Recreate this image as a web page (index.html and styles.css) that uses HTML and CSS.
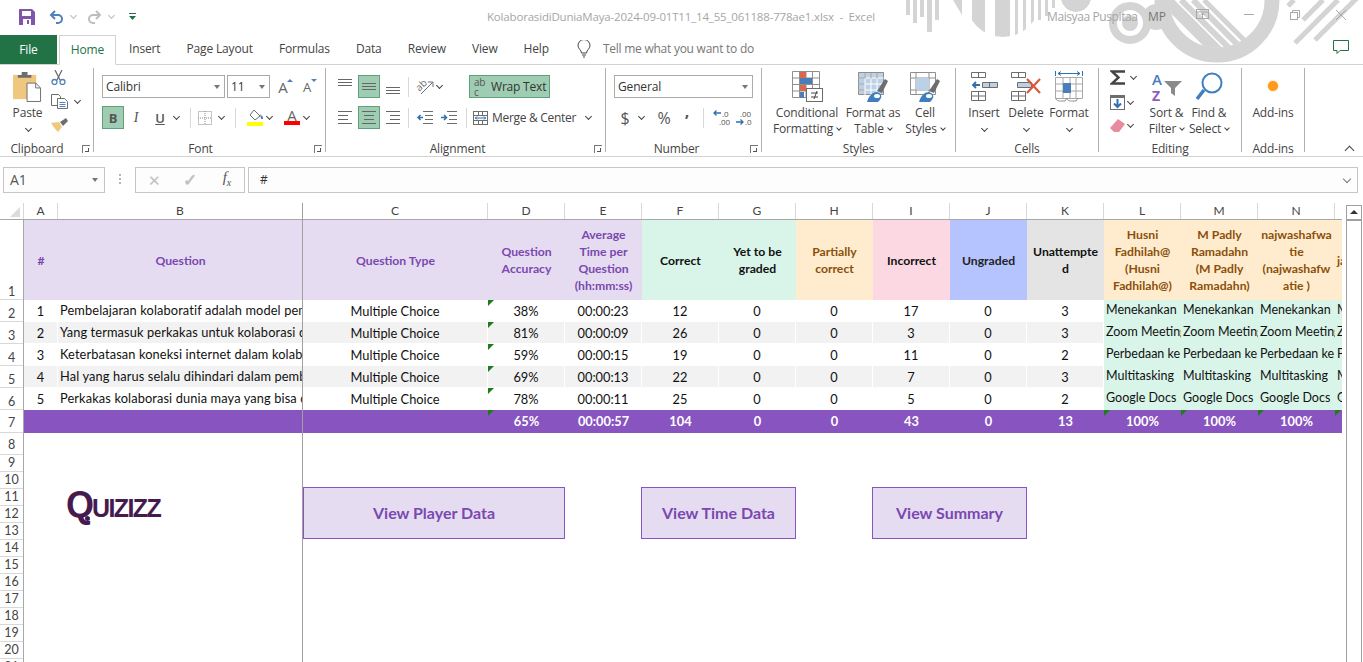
FILE: index.html
```html
<!DOCTYPE html>
<html>

<head>
    <title>KolaborasidiDuniaMaya - Excel</title>
    <link rel="stylesheet" href="styles.css">
</head>

<body>
    <!-- title bar -->
    <div class="titlebar">
        <svg class="title-art" width="463" height="66" viewBox="900 0 463 66" fill="#d4d4d4">
            <defs>
                <clipPath id="semi"><circle cx="1003" cy="0" r="37" /></clipPath>
                <clipPath id="inner"><circle cx="1217" cy="0" r="48" /></clipPath>
            </defs>
            <rect x="906" y="0" width="4" height="15" />
            <rect x="913" y="0" width="4" height="23" />
            <rect x="920" y="0" width="4" height="17" />
            <rect x="927" y="0" width="5" height="32" />
            <rect x="935" y="0" width="4" height="20" />
            <polygon points="953,0 962,15 962,0" />
            <g clip-path="url(#semi)">
                <rect x="972" y="0" width="13" height="40" />
                <rect x="995" y="0" width="15" height="40" />
                <rect x="1015" y="0" width="3" height="40" />
                <rect x="1023" y="0" width="3" height="40" />
                <rect x="1031" y="0" width="3" height="40" />
            </g>
            <rect x="1038" y="0" width="3" height="20" />
            <rect x="1045" y="0" width="3" height="16" />
            <rect x="1052" y="0" width="3" height="8" />
            <circle cx="1076" cy="-3" r="15" />
            <circle cx="1130" cy="23" r="17" fill="none" stroke="#d4d4d4" stroke-width="8" />
            <circle cx="1130" cy="23" r="8" />
            <circle cx="1156" cy="17" r="13" />
            <circle cx="1217" cy="0" r="55" fill="none" stroke="#d4d4d4" stroke-width="15" />
            <g clip-path="url(#inner)" stroke="#d4d4d4">
                <line x1="1166" y1="0" x2="1236" y2="70" stroke-width="12" />
                <line x1="1181" y1="0" x2="1251" y2="70" stroke-width="6" />
                <line x1="1193" y1="0" x2="1263" y2="70" stroke-width="6" />
                <line x1="1204" y1="0" x2="1274" y2="70" stroke-width="5" />
            </g>
            <g stroke="#d4d4d4" stroke-width="5">
                <line x1="1295" y1="43" x2="1338" y2="0" />
                <line x1="1315" y1="40" x2="1357" y2="-2" />
                <line x1="1303" y1="20" x2="1323" y2="0" />
                <line x1="1288" y1="6" x2="1294" y2="0" />
            </g>
        </svg>

        <div class="qat">
            <svg class="qat-save" width="16" height="16" viewBox="0 0 16 16">
                <path d="M0 0h13l3 3v13H0z" fill="#7e57a8" />
                <rect x="3" y="2" width="9" height="5" fill="#fff" />
                <rect x="4" y="10" width="8" height="6" fill="#fff" />
                <rect x="8" y="11" width="2" height="4" fill="#7e57a8" />
            </svg>
            <svg class="qat-arrow" width="15" height="14" viewBox="0 0 15 14" fill="none" stroke="#4f81bd" stroke-width="2">
                <path d="M6 1L2 5l4 4" />
                <path d="M2 5h7a4 4 0 0 1 0 8H7" />
            </svg>
            <span class="chev chev-pale"></span>
            <svg class="qat-arrow" width="15" height="14" viewBox="0 0 15 14" fill="none" stroke="#bdbdbd" stroke-width="2">
                <path d="M9 1l4 4-4 4" />
                <path d="M13 5H6a4 4 0 0 0 0 8h2" />
            </svg>
            <span class="chev chev-pale"></span>
            <svg class="qat-custom" width="7" height="7" viewBox="0 0 7 7" fill="#217346">
                <rect x="0" y="0" width="7" height="1" />
                <polygon points="0,3 7,3 3.5,7" />
            </svg>
        </div>
        <div class="doc-title">KolaborasidiDuniaMaya-2024-09-01T11_14_55_061188-778ae1.xlsx &nbsp;-&nbsp; Excel</div>
        <div class="user-name">Maisyaa Puspitaa</div>
        <div class="user-init">MP</div>
        <div class="win-btns">
            <svg width="13" height="11" viewBox="0 0 13 11" fill="none" stroke="#a8a8a8">
                <rect x="0.5" y="0.5" width="12" height="9" />
                <path d="M0 3h13M6.5 9V4M4.5 6l2-2 2 2" />
            </svg>
            <svg width="10" height="1" viewBox="0 0 10 1"><rect width="10" height="1" fill="#a8a8a8" /></svg>
            <svg width="10" height="10" viewBox="0 0 10 10" fill="none" stroke="#a8a8a8">
                <rect x="0.5" y="2.5" width="7" height="7" />
                <path d="M2.5 2.5v-2h7v7h-2" />
            </svg>
            <svg width="10" height="10" viewBox="0 0 10 10" stroke="#a8a8a8"><path d="M0 0l10 10M10 0L0 10" /></svg>
        </div>
    </div>

    <!-- tabs -->
    <div class="tabs">
        <div class="tab-file">File</div>
        <div class="tab-home">Home</div>
        <div class="tab">Insert</div>
        <div class="tab">Page Layout</div>
        <div class="tab">Formulas</div>
        <div class="tab">Data</div>
        <div class="tab">Review</div>
        <div class="tab">View</div>
        <div class="tab">Help</div>
        <svg class="bulb" width="14" height="18" viewBox="0 0 14 18" fill="none" stroke="#444">
            <path d="M4.5 13c0-3-3.500-4-3.500-7.500a6 6 0 0 1 12 0C13 9 9.500 10 9.500 13z" />
            <path d="M5 15h4M6 17h2" />
        </svg>
        <div class="tell-me">Tell me what you want to do</div>
        <svg class="comment" width="17" height="15" viewBox="0 0 17 15" fill="none" stroke="#217346">
            <path d="M0.500 0.500h15v10H7l-3 3v-3H0.500z" />
        </svg>
    </div>

    <!-- ribbon -->
    <div class="ribbon">
        <div class="group group-clip">
            <div class="group-body">
                <div class="big big-paste">
                    <div class="big-icon">
                        <svg width="29" height="31" viewBox="0 0 30 32">
                            <rect x="0" y="4" width="24" height="25" fill="#efc77f" />
                            <path d="M5 7V4h4V1h6v3h4v3z" fill="#6d6d6d" />
                            <path d="M14.500 12.500h9l5 5v14h-14z" fill="#fff" stroke="#6d6d6d" />
                            <path d="M23.500 12.500v5h5" fill="none" stroke="#6d6d6d" />
                        </svg>
                    </div>
                    <span>Paste</span>
                    <span class="chev-line"><i class="chev"></i></span>
                </div>
                <div class="clip-tools">
                    <svg width="15" height="15" viewBox="0 0 15 15" fill="none">
                        <path d="M4 0l5 10M11 0L6 10" stroke="#6d6d6d" stroke-width="1.300" />
                        <circle cx="3.500" cy="12" r="2.500" stroke="#4f81bd" stroke-width="1.300" />
                        <circle cx="11.500" cy="12" r="2.500" stroke="#4f81bd" stroke-width="1.300" />
                    </svg>
                    <div class="row-tight">
                        <svg width="18" height="15" viewBox="0 0 18 15" fill="#fff" stroke="#6d6d6d">
                            <path d="M0.500 0.500h7l2 2v9h-9z" />
                            <path d="M6.500 4.500h7l3 3v7h-10z" />
                            <path d="M8.500 8.500h6M8.500 10.500h6M8.500 12.500h6" stroke="#4f81bd" />
                        </svg>
                        <i class="chev chev-copy"></i>
                    </div>
                    <svg width="17" height="14" viewBox="0 0 17 14">
                        <path d="M0 5l8-1 3 5-4 5C5 12 2 8 0 5z" fill="#efc77f" />
                        <path d="M9 4l6-4 2 3-5 5z" fill="#6d6d6d" />
                    </svg>
                </div>
            </div>
            <div class="group-label">Clipboard</div>
            <i class="launcher"></i>
        </div>

        <div class="group group-font">
            <div class="group-body stack">
                <div class="tool-row">
                    <div class="select select-font">Calibri<i class="caret"></i></div>
                    <div class="select select-size">11<i class="caret"></i></div>
                    <div class="tb grow">A<i class="mini-up"></i></div>
                    <div class="tb shrink">A<i class="mini-down"></i></div>
                </div>
                <div class="tool-row">
                    <div class="tb on fmt-b">B</div>
                    <div class="tb fmt-i">I</div>
                    <div class="tb fmt-u">U</div>
                    <i class="chev"></i>
                    <i class="vsep"></i>
                    <div class="tb">
                        <svg width="14" height="14" viewBox="0 0 14 14" fill="none" stroke="#8a8a8a" stroke-dasharray="1 1">
                            <path d="M0.500 0.500h13v13h-13zM7 0v14M0 7h14" />
                        </svg>
                    </div>
                    <i class="chev"></i>
                    <i class="vsep"></i>
                    <div class="tb gap-5">
                        <svg width="17" height="17" viewBox="0 0 17 17">
                            <path d="M7 1l6 6-5 4-5-5z" fill="#fff" stroke="#6d6d6d" />
                            <path d="M13 5l3 3v2h-2z" fill="#4f81bd" />
                            <rect x="0" y="13" width="16" height="4" fill="#ffff00" />
                        </svg>
                    </div>
                    <i class="chev chev-1"></i>
                    <div class="tb gap-7 font-color">A</div>
                    <i class="chev chev-1"></i>
                </div>
            </div>
            <div class="group-label">Font</div>
            <i class="launcher"></i>
        </div>

        <div class="group group-align">
            <div class="group-body stack">
                <div class="tool-row">
                    <div class="tb"><i class="lines lines-top"></i></div>
                    <div class="tb on gap-2"><i class="lines"></i></div>
                    <div class="tb gap-2"><i class="lines lines-bot"></i></div>
                    <i class="vsep vsep-4"></i>
                    <div class="tb gap-5">
                        <svg width="18" height="18" viewBox="0 0 18 18" fill="none" stroke="#6d6d6d">
                            <text x="0" y="11" font-size="10" font-family="Open Sans, sans-serif" fill="#6d6d6d" stroke="none" transform="rotate(-45 5 8)">ab</text>
                            <path d="M5 16L16 5M12 4h5v5" />
                        </svg>
                    </div>
                    <i class="chev chev-1"></i>
                    <div class="wrap-btn">
                        <span class="abc"><b>ab</b><b>c</b></span>
                        <span>Wrap Text</span>
                    </div>
                </div>
                <div class="tool-row">
                    <div class="tb"><i class="lines lines-left"></i></div>
                    <div class="tb on gap-2"><i class="lines lines-center"></i></div>
                    <div class="tb gap-2"><i class="lines lines-right"></i></div>
                    <i class="vsep vsep-4"></i>
                    <div class="tb gap-5">
                        <svg width="16" height="13" viewBox="0 0 16 13" fill="none">
                            <path d="M6 .500h10M8 4.500h8M8 8.500h8M6 12.500h10" stroke="#6d6d6d" />
                            <path d="M6 6.500H1M3.500 4l-2.500 2.500L3.500 9" stroke="#2f6fb0" stroke-width="1.500" />
                        </svg>
                    </div>
                    <div class="tb gap-2">
                        <svg width="16" height="13" viewBox="0 0 16 13" fill="none">
                            <path d="M6 .500h10M8 4.500h8M8 8.500h8M6 12.500h10" stroke="#6d6d6d" />
                            <path d="M0 6.500h5M3 4l2.500 2.500L3 9" stroke="#2f6fb0" stroke-width="1.500" />
                        </svg>
                    </div>
                    <i class="vsep vsep-merge"></i>
                    <div class="merge">
                        <svg width="15" height="14" viewBox="0 0 15 14" fill="none" stroke="#6d6d6d">
                            <rect x="0.500" y="0.500" width="14" height="13" />
                            <path d="M0 4.500h15M0 9.500h15M5.500 0v4M9.500 0v4M5.500 10v4M9.500 10v4" />
                            <path d="M2 7h11M4 5.500L2.500 7 4 8.500M11 5.500L12.500 7 11 8.500" stroke="#2f6fb0" />
                        </svg>
                        <span class="merge-text">Merge &amp; Center</span>
                        <i class="chev chev-merge"></i>
                    </div>
                </div>
            </div>
            <div class="group-label">Alignment</div>
            <i class="launcher"></i>
        </div>

        <div class="group group-number">
            <div class="group-body stack">
                <div class="tool-row">
                    <div class="select select-num">General<i class="caret"></i></div>
                </div>
                <div class="tool-row">
                    <div class="tb num-sym">$</div>
                    <i class="chev"></i>
                    <div class="tb gap-7 num-sym">%</div>
                    <div class="tb num-sym num-comma gap-1">,</div>
                    <i class="vsep vsep-5"></i>
                    <div class="tb gap-7">
                        <svg width="18" height="16" viewBox="0 0 18 16" fill="none">
                            <path d="M8 3H1M3.500 .500L1 3l2.500 2.500" stroke="#2f6fb0" stroke-width="1.300" />
                            <text x="9" y="7" font-size="8" font-family="Open Sans, sans-serif" fill="#555">.0</text>
                            <text x="6" y="15" font-size="8" font-family="Open Sans, sans-serif" fill="#555">.00</text>
                        </svg>
                    </div>
                    <div class="tb">
                        <svg width="18" height="16" viewBox="0 0 18 16" fill="none">
                            <text x="5" y="7" font-size="8" font-family="Open Sans, sans-serif" fill="#555">.00</text>
                            <path d="M1 12h7M5.500 9.500L8 12l-2.500 2.500" stroke="#2f6fb0" stroke-width="1.300" />
                            <text x="10" y="15" font-size="8" font-family="Open Sans, sans-serif" fill="#555">.0</text>
                        </svg>
                    </div>
                </div>
            </div>
            <div class="group-label">Number</div>
            <i class="launcher"></i>
        </div>

        <div class="group group-styles">
            <div class="group-body">
                <div class="big big-cond">
                    <div class="big-icon">
                        <svg width="31" height="31" viewBox="0 0 31 31">
                            <path d="M.500 .500h27v26h-27zM.500 7h27M.500 13.500h27M.500 20h27M7.500 0v27M14 0v27M20.500 0v27" fill="#fff" stroke="#8f8f8f" />
                            <rect x="8" y="1" width="6" height="6" fill="#d9694a" />
                            <rect x="8" y="7" width="12" height="6" fill="#4a7ebb" />
                            <rect x="8" y="14" width="6" height="6" fill="#d9694a" />
                            <rect x="8" y="21" width="4" height="6" fill="#4a7ebb" />
                            <rect x="14.500" y="17.500" width="16" height="13" fill="#fff" stroke="#6d6d6d" />
                            <path d="M19 22h7M19 26h7M25 20l-3 8" stroke="#444" fill="none" />
                        </svg>
                    </div>
                    <span>Conditional</span>
                    <span>Formatting<i class="chev chev-text"></i></span>
                </div>
                <div class="big big-table">
                    <div class="big-icon">
                        <svg width="30" height="30" viewBox="0 0 30 30">
                            <path d="M.500 .500h25v22h-25z" fill="#bcd0e6" stroke="#8f8f8f" />
                            <path d="M.500 6h25M.500 12h25M.500 18h25M7 0v23M13 0v23M19 0v23" stroke="#fff" />
                            <path d="M.500 .500h25M.500 6h6M.500 12h6M.500 18h6M7 .500v6M13 .500v6M19 .500v6" stroke="#8f8f8f" fill="none" />
                            <path d="M19 19l8-12 3 2-6 12z" fill="#6d6d6d" />
                            <path d="M9 30c2-7 6-10 10-10 3 1 5 3 4 6-1 2-2 3-3 4z" fill="#3f7fbf" />
                            <ellipse cx="19" cy="24" rx="3" ry="2" fill="#fff" />
                        </svg>
                    </div>
                    <span>Format as</span>
                    <span>Table<i class="chev chev-text"></i></span>
                </div>
                <div class="big big-cell">
                    <div class="big-icon">
                        <svg width="30" height="30" viewBox="0 0 30 30">
                            <path d="M.500 .500h25v22h-25zM.500 6h25M.500 18h25M6 0v23M19 0v23" fill="#fff" stroke="#8f8f8f" />
                            <rect x="6" y="6" width="13" height="12" fill="#bcd0e6" />
                            <path d="M19 19l8-12 3 2-6 12z" fill="#6d6d6d" />
                            <path d="M9 30c2-7 6-10 10-10 3 1 5 3 4 6-1 2-2 3-3 4z" fill="#3f7fbf" />
                            <ellipse cx="19" cy="24" rx="3" ry="2" fill="#fff" />
                        </svg>
                    </div>
                    <span>Cell</span>
                    <span>Styles<i class="chev chev-text"></i></span>
                </div>
            </div>
            <div class="group-label">Styles</div>
        </div>

        <div class="group group-cells">
            <div class="group-body">
                <div class="big big-insert">
                    <div class="big-icon">
                        <svg width="27" height="29" viewBox="0 0 27 29" fill="none" stroke="#6d6d6d">
                            <path d="M.500 .500h14v5h-14zM7.500 .500v5" />
                            <path d="M11.500 10.500h15v5h-15zM18.500 10.500v5" fill="#bcd0e6" />
                            <path d="M.500 19.500h14v9h-14zM.500 24h14M7.500 19.500v9" />
                            <path d="M9 13H2M5 10l-3 3 3 3" stroke="#2f6fb0" stroke-width="1.800" />
                        </svg>
                    </div>
                    <span>Insert</span>
                    <span class="chev-line"><i class="chev"></i></span>
                </div>
                <div class="big big-delete">
                    <div class="big-icon">
                        <svg width="31" height="29" viewBox="0 0 31 29" fill="none" stroke="#6d6d6d">
                            <path d="M.500 .500h14v5h-14zM7.500 .500v5" />
                            <path d="M6.500 10.500h14v5h-14z" fill="#bcd0e6" />
                            <path d="M.500 19.500h14v9h-14zM.500 24h14M7.500 19.500v9" />
                            <path d="M16 7l13 14M29 7L16 21" stroke="#d9593a" stroke-width="2.200" />
                        </svg>
                    </div>
                    <span>Delete</span>
                    <span class="chev-line"><i class="chev"></i></span>
                </div>
                <div class="big big-format">
                    <div class="big-icon">
                        <svg width="28" height="31" viewBox="0 0 28 31" fill="none">
                            <path d="M.500 6.500h27v21h-27zM.500 13h27M.500 20h27M8 6.500v21M15 6.500v21M21 6.500v21" fill="#fff" stroke="#a8a8a8" />
                            <rect x="8" y="12" width="8" height="10" fill="#4a7ebb" />
                            <path d="M.500 0v5M27.500 0v5M3 2.500h22M6 .500L3 2.500l3 2M22 .500l3 2-3 2" stroke="#2f6fb0" />
                            <path d="M1 27c0 3 3 3 5 3h4l2-3M12 27c0 3 3 3 5 3h4l2-3" stroke="#8f8f8f" />
                        </svg>
                    </div>
                    <span>Format</span>
                    <span class="chev-line"><i class="chev"></i></span>
                </div>
            </div>
            <div class="group-label">Cells</div>
        </div>

        <div class="group group-edit">
            <div class="group-body">
                <div class="edit-tools">
                    <div class="row-tight">
                        <svg width="15" height="15" viewBox="0 0 15 15" fill="none" stroke="#444">
                            <path d="M15 1.500H2L8.500 7.500 2 13.500h13" stroke-width="2.400" />
                        </svg>
                        <i class="chev chev-sum"></i>
                    </div>
                    <div class="row-tight">
                        <svg width="15" height="15" viewBox="0 0 15 15">
                            <rect x="0.500" y="0.500" width="14" height="14" fill="#fff" stroke="#6d6d6d" />
                            <rect x="0" y="0" width="15" height="3" fill="#6d6d6d" />
                            <path d="M7.500 4v8M4 8.500l3.500 3.500L11 8.500" fill="none" stroke="#2f6fb0" stroke-width="2" />
                        </svg>
                        <i class="chev"></i>
                    </div>
                    <div class="row-tight">
                        <svg width="15" height="13" viewBox="0 0 15 13">
                            <path d="M0 9l8-9 7 5-6 8H4z" fill="#e98b9e" />
                        </svg>
                        <i class="chev"></i>
                    </div>
                </div>
                <div class="big big-sort">
                    <div class="big-icon">
                        <svg width="31" height="32" viewBox="0 0 31 32">
                            <text x="1" y="14" font-size="15" font-family="Open Sans, sans-serif" font-weight="600" fill="#4a7ebb">A</text>
                            <text x="1" y="30" font-size="14" font-family="Open Sans, sans-serif" font-weight="700" fill="#8d5fb8">Z</text>
                            <path d="M13 10h18l-7 7v8l-4-3v-5z" fill="#8a8a8a" />
                        </svg>
                    </div>
                    <span>Sort &amp;</span>
                    <span>Filter<i class="chev chev-text"></i></span>
                </div>
                <div class="big big-find">
                    <div class="big-icon">
                        <svg width="28" height="29" viewBox="0 0 28 29" fill="none" stroke="#3f7fbf">
                            <circle cx="17" cy="11" r="9.500" stroke-width="2" />
                            <path d="M9 18L2 27" stroke-width="3.500" />
                        </svg>
                    </div>
                    <span>Find &amp;</span>
                    <span>Select<i class="chev chev-text"></i></span>
                </div>
            </div>
            <div class="group-label">Editing</div>
        </div>

        <div class="group group-addins">
            <div class="group-body">
                <div class="big big-addins">
                    <div class="big-icon"><i class="addin-dot"></i></div>
                    <span>Add-ins</span>
                </div>
            </div>
            <div class="group-label">Add-ins</div>
        </div>

        <i class="collapse"></i>
    </div>

    <!-- formula bar -->
    <div class="formula-bar">
        <div class="name-box">A1<i class="caret"></i></div>
        <div class="fx-dots"></div>
        <div class="fx-buttons">
            <span class="fx-x">&#10005;</span>
            <span class="fx-check">&#10003;</span>
            <span class="fx-f">f<sub>x</sub></span>
        </div>
        <div class="fx-input">#<i class="chev chev-fx"></i></div>
    </div>

    <!-- sheet -->
    <div class="sheet-wrap">
        <div class="sheet">
            <div class="col-heads">
                <div class="corner"><i class="corner-tri"></i></div>
                <div>A</div><div>B</div><div>C</div><div>D</div><div>E</div><div>F</div><div>G</div><div>H</div><div>I</div><div>J</div><div>K</div><div>L</div><div>M</div><div>N</div><div>O</div>
            </div>
            <div class="sheet-body">
                <div class="row-heads">
                    <div class="rh rh-1">1</div>
                    <div class="rh rh-22">2</div><div class="rh rh-22">3</div><div class="rh rh-22">4</div><div class="rh rh-22">5</div><div class="rh rh-22">6</div>
                    <div class="rh rh-23">7</div><div class="rh rh-8">8</div>
                    <div class="rh">9</div><div class="rh">10</div><div class="rh">11</div><div class="rh">12</div><div class="rh">13</div><div class="rh">14</div><div class="rh">15</div><div class="rh">16</div><div class="rh">17</div><div class="rh">18</div><div class="rh">19</div><div class="rh">20</div><div class="rh">21</div>
                </div>
                <div class="canvas">
                    <div class="cells">
                        <div class="h h-p">#</div><div class="h h-p">Question</div><div class="h h-p">Question Type</div><div class="h h-p">Question Accuracy</div><div class="h h-p">Average Time per Question (hh:mm:ss)</div>
                        <div class="h h-g">Correct</div><div class="h h-g">Yet to be graded</div><div class="h h-o">Partially correct</div><div class="h h-r">Incorrect</div><div class="h h-b">Ungraded</div><div class="h h-n">Unattempte<br>d</div>
                        <div class="h h-o">Husni Fadhilah@ (Husni Fadhilah@)</div><div class="h h-o">M Padly Ramadahn (M Padly Ramadahn)</div><div class="h h-o">najwashafwatie (najwashafwatie )</div><div class="h h-o h-cut">ja</div>

                        <div class="c">1</div><div class="c q">Pembelajaran kolaboratif adalah model pembelajaran</div><div class="c">Multiple Choice</div><div class="c tri">38%</div><div class="c">00:00:23</div><div class="c">12</div><div class="c">0</div><div class="c">0</div><div class="c">17</div><div class="c">0</div><div class="c">3</div><div class="a">Menekankan</div><div class="a">Menekankan</div><div class="a">Menekankan</div><div class="a">Menekankan</div>

                        <div class="c s">2</div><div class="c s q">Yang termasuk perkakas untuk kolaborasi dunia maya</div><div class="c s">Multiple Choice</div><div class="c s tri">81%</div><div class="c s">00:00:09</div><div class="c s">26</div><div class="c s">0</div><div class="c s">0</div><div class="c s">3</div><div class="c s">0</div><div class="c s">3</div><div class="a">Zoom Meeting</div><div class="a">Zoom Meeting</div><div class="a">Zoom Meeting</div><div class="a">Zoom Meeting</div>

                        <div class="c">3</div><div class="c q">Keterbatasan koneksi internet dalam kolaborasi</div><div class="c">Multiple Choice</div><div class="c tri">59%</div><div class="c">00:00:15</div><div class="c">19</div><div class="c">0</div><div class="c">0</div><div class="c">11</div><div class="c">0</div><div class="c">2</div><div class="a">Perbedaan ke</div><div class="a">Perbedaan ke</div><div class="a">Perbedaan ke</div><div class="a">Perbedaan ke</div>

                        <div class="c s">4</div><div class="c s q">Hal yang harus selalu dihindari dalam pembelajaran</div><div class="c s">Multiple Choice</div><div class="c s tri">69%</div><div class="c s">00:00:13</div><div class="c s">22</div><div class="c s">0</div><div class="c s">0</div><div class="c s">7</div><div class="c s">0</div><div class="c s">3</div><div class="a">Multitasking</div><div class="a">Multitasking</div><div class="a">Multitasking</div><div class="a">Multitasking</div>

                        <div class="c">5</div><div class="c q">Perkakas kolaborasi dunia maya yang bisa digunakan</div><div class="c">Multiple Choice</div><div class="c tri">78%</div><div class="c">00:00:11</div><div class="c">25</div><div class="c">0</div><div class="c">0</div><div class="c">5</div><div class="c">0</div><div class="c">2</div><div class="a">Google Docs</div><div class="a">Google Docs</div><div class="a">Google Docs</div><div class="a">Google Docs</div>

                        <div class="t"></div><div class="t"></div><div class="t"></div><div class="t tri">65%</div><div class="t">00:00:57</div><div class="t">104</div><div class="t">0</div><div class="t">0</div><div class="t">43</div><div class="t">0</div><div class="t">13</div><div class="t tri">100%</div><div class="t tri">100%</div><div class="t tri">100%</div><div class="t tri"></div>
                    </div>

                    <div class="logo"><span class="logo-q">Q</span>UIZIZZ</div>
                    <div class="sheet-btn btn-player">View Player Data</div>
                    <div class="sheet-btn btn-time">View Time Data</div>
                    <div class="sheet-btn btn-summary">View Summary</div>
                </div>
            </div>
            <div class="freeze-line"></div>
        </div>
        <div class="scrollbar">
            <div class="scroll-up"><i></i></div>
            <div class="scroll-thumb"></div>
        </div>
    </div>
</body>

</html>
```

FILE: styles.css
```css
html, body {
    margin: 0;
    padding: 0;
    height: 662px;
    overflow: hidden;
    background: #fff;
}

body {
    font-family: "Open Sans", sans-serif;
    font-size: 12px;
    letter-spacing: -0.15px;
    color: #444;
    width: 1363px;
}

i {
    font-style: normal;
}

/* title bar */
.titlebar {
    height: 33px;
    display: flex;
    align-items: center;
    position: relative;
}

.title-art {
    position: absolute;
    left: 900px;
    top: 0;
}

.qat {
    width: 487px;
    display: flex;
    align-items: center;
    position: relative;
    padding-left: 19px;
    box-sizing: border-box;
}

.qat-save {
    margin-right: 14px;
}

.qat-custom {
    margin-left: 4px;
}

.qat-arrow {
    margin-right: 7px;
}

.qat .chev {
    margin: 0 11px 2px 0;
}

.doc-title {
    width: 560px;
    color: #a6a6a6;
    position: relative;
    white-space: nowrap;
    font-size: 11.500px;
    letter-spacing: -0.18px;
}

.user-name {
    width: 101px;
    color: #a6a6a6;
    position: relative;
    white-space: nowrap;
    letter-spacing: -0.4px;
}

.user-init {
    width: 48px;
    color: #777;
    position: relative;
}

.win-btns {
    display: flex;
    position: relative;
    align-items: center;
    margin-bottom: 4px;
}

.win-btns svg:nth-child(2) {
    margin-left: 35px;
}

.win-btns svg:nth-child(3) {
    margin-left: 36px;
}

.win-btns svg:nth-child(4) {
    margin-left: 36px;
}

/* tabs */
.tabs {
    height: 31px;
    display: flex;
    align-items: center;
    position: relative;
}

.tab-file {
    width: 57px;
    height: 29px;
    margin-top: 1px;
    background: #217346;
    color: #fff;
    text-align: center;
    line-height: 29px;
}

.tab-home {
    width: 57px;
    height: 30px;
    margin-left: 2px;
    margin-top: 2px;
    border: 1px solid #d2d2d2;
    border-bottom: 1px solid #fff;
    color: #217346;
    text-align: center;
    line-height: 28px;
    box-sizing: border-box;
    position: relative;
    z-index: 2;
    background: #fff;
}

.tab {
    padding: 0 13px;
    line-height: 30px;
}

.bulb {
    margin-left: 15px;
}

.tell-me {
    margin-left: 12px;
    color: #777;
    letter-spacing: -0.25px;
}

.comment {
    position: absolute;
    left: 1333px;
    top: 7px;
}

/* ribbon */
.ribbon {
    height: 93px;
    box-sizing: border-box;
    border-top: 1px solid #d2d2d2;
    border-bottom: 1px solid #d2d2d2;
    display: flex;
    position: relative;
}

.group {
    height: 84px;
    margin-top: 3px;
    box-sizing: border-box;
    border-right: 1px solid #b0b0b0;
    display: flex;
    flex-direction: column;
    position: relative;
}

.group-clip { width: 94px; padding-left: 9px; }
.group-font { width: 232px; padding-left: 8px; }
.group-align { width: 280px; padding-left: 8px; }
.group-number { width: 156px; padding-left: 8px; }
.group-styles { width: 194px; padding-left: 10px; }
.group-cells { width: 143px; padding-left: 7px; }
.group-edit { width: 143px; padding-left: 11px; }
.group-addins { width: 63px; }

.group-body {
    height: 72px;
    display: flex;
}

.group-body.stack {
    flex-direction: column;
    gap: 8px;
    padding-top: 7px;
    box-sizing: border-box;
}

.group-label {
    height: 16px;
    line-height: 16px;
    text-align: center;
    margin-top: 1px;
    margin-bottom: -5px;
    color: #444;
}

.group-clip .group-label { margin-left: -9px; padding-right: 19px; }
.group-font .group-label { margin-left: -8px; padding-right: 18px; }
.group-align .group-label { margin-left: -8px; padding-right: 16px; }
.group-number .group-label { margin-left: -8px; padding-right: 14px; }
.group-styles .group-label { margin-left: -10px; }
.group-cells .group-label { margin-left: -7px; }
.group-edit .group-label { margin-left: -11px; }

.launcher {
    position: absolute;
    right: 3px;
    bottom: -1px;
    width: 7px;
    height: 7px;
    border-left: 1px solid #777;
    border-top: 1px solid #777;
}

.launcher::after {
    content: "";
    position: absolute;
    left: 2px;
    top: 2px;
    width: 3px;
    height: 3px;
    border-right: 1px solid #555;
    border-bottom: 1px solid #555;
}

.collapse {
    position: absolute;
    left: 1346px;
    top: 82px;
    width: 6px;
    height: 6px;
    border-left: 1px solid #444;
    border-top: 1px solid #444;
    transform: rotate(45deg);
}

.big {
    display: flex;
    flex-direction: column;
    align-items: center;
    line-height: 16px;
    white-space: nowrap;
}

.big-icon {
    height: 37px;
    display: flex;
    align-items: center;
    justify-content: center;
}

.big-paste { width: 37px; }
.big-cond { width: 70px; }
.big-table { width: 62px; }
.big-cell { width: 42px; }
.big-insert { width: 42px; }
.big-delete { width: 42px; }
.big-format { width: 44px; }
.big-sort { width: 41px; }
.big-find { width: 44px; }
.big-addins { width: 62px; }

.clip-tools {
    margin-left: 5px;
    height: 62px;
    padding-top: 2px;
    display: flex;
    flex-direction: column;
    justify-content: space-between;
}

.edit-tools {
    width: 36px;
    height: 62px;
    padding-top: 2px;
    display: flex;
    flex-direction: column;
    justify-content: space-between;
}

.row-tight {
    display: flex;
    align-items: center;
}

.chev {
    display: inline-block;
    width: 4px;
    height: 4px;
    margin-left: 3px;
    margin-right: 2px;
    margin-bottom: 2px;
    border-right: 1px solid #444;
    border-bottom: 1px solid #444;
    transform: rotate(45deg);
    flex: none;
}

.chev-pale { border-color: #bbb; }
.chev-1 { margin-left: 1px; }
.chev-copy { margin-left: 6px; }
.chev-sum { margin-left: 6px; }
.chev-text { margin-left: 4px; margin-right: 0; margin-bottom: 3px; width: 3px; height: 3px; }
.chev-merge { margin-left: 10px; }
.chev-fx { position: absolute; right: 5px; top: 8px; border-color: #777; width: 5px; height: 5px; }

.chev-line {
    height: 16px;
    display: flex;
    align-items: center;
}

.tool-row {
    display: flex;
    align-items: center;
    height: 23px;
}

.tb {
    width: 22px;
    height: 23px;
    box-sizing: border-box;
    display: flex;
    align-items: center;
    justify-content: center;
    flex: none;
    position: relative;
}

.tb.on {
    background: #9fcdb3;
    border: 1px solid #5fa27a;
}

.gap-1 { margin-left: 1px; }
.gap-2 { margin-left: 2px; }
.gap-5 { margin-left: 5px; }
.gap-7 { margin-left: 7px; }

.vsep {
    width: 1px;
    height: 20px;
    background: #d8d8d8;
    margin: 0 3px 0 9px;
    flex: none;
}

.vsep-4 { margin: 0 0 0 4px; }
.vsep-5 { margin: 0 0 0 5px; }
.vsep-merge { margin: 0 6px 0 6px; }

.select {
    height: 23px;
    box-sizing: border-box;
    border: 1px solid #ababab;
    line-height: 21px;
    padding-left: 3px;
    position: relative;
    color: #333;
    flex: none;
}

.select-font { width: 123px; }
.select-size { width: 43px; margin-left: 2px; margin-right: 2px; }
.select-num { width: 139px; }

.caret {
    position: absolute;
    right: 4px;
    top: 9px;
    border-left: 3.500px solid transparent;
    border-right: 3.500px solid transparent;
    border-top: 4px solid #777;
}

.grow, .shrink {
    color: #666;
    font-size: 15px;
}

.shrink {
    margin-left: 2px;
    font-size: 13px;
}

.mini-up, .mini-down {
    position: absolute;
    right: 1px;
    top: 4px;
    border-left: 3px solid transparent;
    border-right: 3px solid transparent;
}

.mini-up { border-bottom: 3px solid #4f81bd; }
.mini-down { border-top: 3px solid #4f81bd; }

.fmt-b { font-weight: 700; font-size: 13px; color: #555; }
.fmt-i { font-style: italic; font-size: 14px; color: #555; font-family: "Liberation Serif", serif; margin-left: 1px; }
.fmt-u { font-size: 13px; font-weight: 600; text-decoration: underline; margin-left: 2px; color: #555; }

.font-color {
    font-size: 15px;
    font-weight: 500;
    color: #666;
    align-items: flex-start;
    line-height: 18px;
}

.font-color::after {
    content: "";
    position: absolute;
    left: 3px;
    top: 15px;
    width: 16px;
    height: 4px;
    background: #ff0000;
}

.lines {
    display: block;
    width: 14px;
    height: 7px;
    border-top: 1px solid #666;
    border-bottom: 1px solid #666;
    position: relative;
    box-sizing: border-box;
}

.lines::after {
    content: "";
    position: absolute;
    left: 0;
    right: 0;
    top: 2px;
    height: 1px;
    background: #666;
}

.lines-top { margin-bottom: 8px; }
.lines-bot { margin-top: 8px; }

.lines-left, .lines-center, .lines-right {
    height: 13px;
    background: linear-gradient(#666, #666) 0 3px / 10px 1px no-repeat, linear-gradient(#666, #666) 0 7px / 10px 1px no-repeat;
}

.lines-left::after, .lines-center::after, .lines-right::after { display: none; }
.lines-center { background-position: 2px 3px, 2px 7px; }
.lines-right { background-position: 4px 3px, 4px 7px; }

.wrap-btn {
    width: 81px;
    height: 23px;
    margin-left: 25px;
    box-sizing: border-box;
    background: #9fcdb3;
    border: 1px solid #5fa27a;
    display: flex;
    align-items: center;
    gap: 5px;
    padding-left: 4px;
    flex: none;
    color: #333;
    white-space: nowrap;
    letter-spacing: -0.2px;
}

.abc {
    display: flex;
    flex-direction: column;
    font-size: 10px;
    line-height: 10px;
    color: #555;
    width: 12px;
}

.abc b {
    font-weight: 400;
}

.merge {
    display: flex;
    align-items: center;
    gap: 4px;
    white-space: nowrap;
}

.merge .chev {
    margin-left: 6px;
}

.merge-text {
    letter-spacing: -0.3px;
}

.num-sym {
    font-size: 16px;
    color: #555;
}

.num-comma {
    font-weight: 700;
    padding-bottom: 14px;
}

.addin-dot {
    display: block;
    width: 10px;
    height: 10px;
    border-radius: 50%;
    background: #ff9a1a;
    box-shadow: 0 0 2px #ffb765;
    margin-bottom: 1px;
}

/* formula bar */
.formula-bar {
    height: 46px;
    box-sizing: border-box;
    padding: 10px 3px 10px 3px;
    display: flex;
    background: #fff;
}

.name-box, .fx-buttons, .fx-input {
    height: 26px;
    box-sizing: border-box;
    border: 1px solid #c6c6c6;
    background: #fdfdfd;
    line-height: 24px;
    position: relative;
}

.name-box {
    width: 102px;
    padding-left: 6px;
    font-size: 14px;
    color: #555;
}

.name-box .caret {
    right: 6px;
    top: 10px;
}

.fx-dots {
    width: 30px;
    position: relative;
}

.fx-dots::after {
    content: "";
    position: absolute;
    left: 14px;
    top: 7px;
    width: 2px;
    height: 2px;
    background: #b5b5b5;
    box-shadow: 0 4px #b5b5b5, 0 8px #b5b5b5;
}

.fx-buttons {
    width: 110px;
    display: flex;
    align-items: center;
}

.fx-x { margin-left: 12px; color: #c0c0c0; font-size: 15px; }
.fx-check { margin-left: 22px; color: #c0c0c0; font-size: 17px; font-weight: 700; }
.fx-f { margin-left: 26px; font-family: "Liberation Serif", serif; font-style: italic; font-size: 15px; color: #555; }
.fx-f sub { font-size: 10px; }

.fx-input {
    width: 1110px;
    margin-left: 3px;
    padding-left: 11px;
    color: #333;
}

/* sheet */
.sheet-wrap {
    display: flex;
    height: 459px;
}

.sheet {
    width: 1342px;
    overflow: hidden;
    position: relative;
}

.col-heads {
    display: grid;
    grid-template-columns: 24px 34px 245px 185px repeat(11, 77px) 77px;
    height: 17px;
    box-sizing: border-box;
    border-bottom: 1px solid #a8a8a8;
    color: #444;
    font-family: "Lato", sans-serif;
    letter-spacing: 0;
    text-align: center;
    line-height: 15px;
    font-size: 12px;
}

.col-heads > div {
    border-right: 1px solid #d8d8d8;
    box-sizing: border-box;
}

.corner {
    position: relative;
}

.corner-tri {
    position: absolute;
    right: 3px;
    bottom: 2px;
    border-left: 10px solid transparent;
    border-bottom: 10px solid #dcdcdc;
}

.sheet-body {
    display: flex;
    height: 442px;
}

.row-heads {
    width: 24px;
    flex: none;
    border-right: 1px solid #a8a8a8;
    box-sizing: border-box;
    font-family: "Lato", sans-serif;
    letter-spacing: 0;
    font-size: 12.500px;
    text-align: center;
}

.rh {
    height: 17px;
    box-sizing: border-box;
    border-bottom: 1px solid #d8d8d8;
    display: flex;
    align-items: flex-end;
    justify-content: center;
    line-height: 16px;
}

.rh-1 { height: 80px; line-height: 14px; }
.rh-22 { height: 22px; line-height: 14px; }
.rh-23 { height: 23px; line-height: 18px; }
.rh-8 { height: 22px; line-height: 18px; }

.canvas {
    flex: 1;
    position: relative;
    font-family: "Lato", sans-serif;
    letter-spacing: 0;
    color: #111;
    font-size: 12.800px;
}

.cells {
    display: grid;
    grid-template-columns: 34px 245px 185px repeat(12, 77px);
    grid-template-rows: 80px repeat(5, 22px) 23px;
}

.h {
    display: flex;
    align-items: center;
    justify-content: center;
    text-align: center;
    font-weight: 700;
    line-height: 17px;
    padding: 0 2px;
    box-sizing: border-box;
    overflow-wrap: anywhere;
    min-width: 0;
    font-size: 12.200px;
}

.h-p { background: #e5dcf1; color: #7a48af; }
.h-g { background: #d9f5ea; color: #111; }
.h-o { background: #ffecce; color: #8a4f0a; }
.h-r { background: #fcd9e2; color: #111; }
.h-b { background: #b5c4ff; color: #222; }
.h-n { background: #e4e4e4; color: #111; display: block; padding-top: 23px; }
.h-cut { justify-content: flex-start; }

.c, .a, .t {
    line-height: 22px;
    white-space: nowrap;
    overflow: hidden;
    box-sizing: border-box;
    position: relative;
}

.c {
    text-align: center;
    border-right: 1px solid #fff;
    border-bottom: 1px solid #fff;
}

.c.s {
    background: #f2f2f2;
}

.c.q {
    text-align: left;
    padding: 0 0 0 2px;
    line-height: 20px;
    letter-spacing: 0.12px;
}

.a {
    background: #d9f5ea;
    padding-left: 2px;
    line-height: 20px;
    font-size: 12.500px;
}

.t {
    background: #8854c0;
    color: #fff;
    font-weight: 700;
    text-align: center;
    line-height: 23px;
}

.tri::before {
    content: "";
    position: absolute;
    left: 0;
    top: 0;
    border-top: 6px solid #1a7f1a;
    border-right: 6px solid transparent;
}

.logo {
    position: absolute;
    left: 42px;
    top: 270px;
    color: #461a4f;
    font-family: "Liberation Sans", sans-serif;
    font-weight: 700;
    font-size: 25px;
    line-height: 29px;
    letter-spacing: -1.600px;
    white-space: nowrap;
}

.logo-q {
    font-size: 36px;
    letter-spacing: -2px;
}

.logo::after {
    content: "";
    position: absolute;
    left: 19px;
    top: 26px;
    width: 5px;
    height: 5px;
    border-radius: 50%;
    background: #461a4f;
}

.sheet-btn {
    position: absolute;
    top: 267px;
    height: 52px;
    box-sizing: border-box;
    border: 1px solid #8854c0;
    background: #e5dcf1;
    color: #7a48af;
    font-weight: 700;
    font-size: 16px;
    display: flex;
    align-items: center;
    justify-content: center;
    white-space: nowrap;
    padding-bottom: 2px;
}

/* offsets are on the canvas, which starts after the 24px row heads */
.btn-player { left: 279px; width: 262px; }
.btn-time { left: 617px; width: 155px; }
.btn-summary { left: 848px; width: 155px; }

.freeze-line {
    position: absolute;
    left: 302px;
    top: 0;
    bottom: 0;
    width: 1px;
    background: #a0a0a0;
}

.scrollbar {
    width: 16px;
    margin-left: 4px;
    margin-top: 2px;
    box-sizing: border-box;
    display: flex;
    flex-direction: column;
}

.scroll-up {
    height: 15px;
    box-sizing: border-box;
    border: 1px solid #a0a0a0;
    position: relative;
}

.scroll-up i {
    position: absolute;
    left: 3px;
    top: 4px;
    border-left: 4px solid transparent;
    border-right: 4px solid transparent;
    border-bottom: 4px solid #333;
}

.scroll-thumb {
    flex: 1;
    border: 1px solid #a0a0a0;
    border-bottom: 0;
}
```
